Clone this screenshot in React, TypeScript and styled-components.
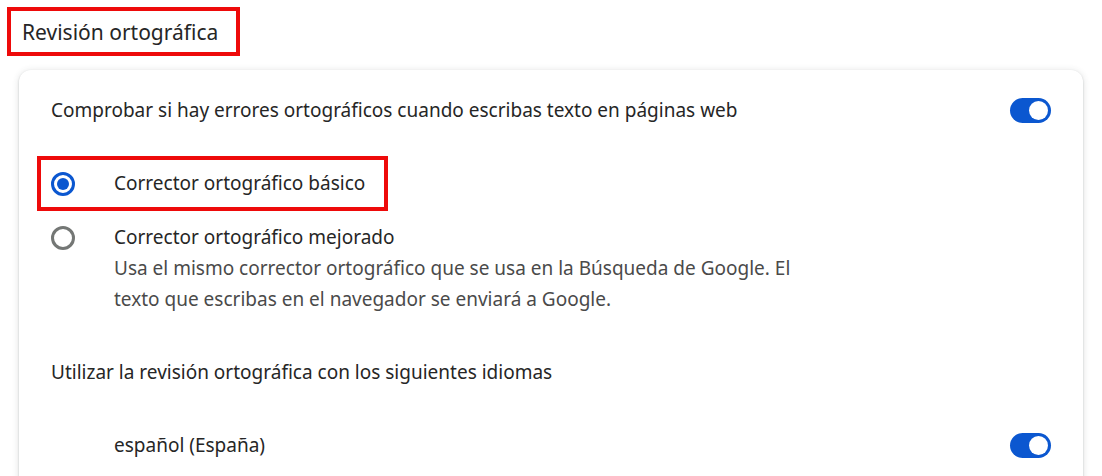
import React, { useState } from 'react'
import styled, { createGlobalStyle } from 'styled-components'

const GlobalStyle = createGlobalStyle`
  html, body {
    margin: 0;
    padding: 0;
    background: #ffffff;
    font-family: "Noto Sans", "Open Sans", sans-serif;
    color: #1f1f1f;
  }
`

const Page = styled.div`
  padding-top: 7px;
  width: 1102px;
  height: 476px;
  overflow: hidden;
`

const TitleBox = styled.div`
  margin-left: 7px;
  width: 233px;
  height: 49px;
  box-sizing: border-box;
  border: 4px solid #ee0a0a;
  padding: 0 11px;
  display: flex;
  align-items: center;
`

const Title = styled.h2`
  margin: 0;
  font-size: 21px;
  font-weight: 400;
  color: #262626;
  white-space: nowrap;
`

const Card = styled.div`
  margin: 14px 0 0 19px;
  width: 1064px;
  padding: 0 32px 40px;
  box-sizing: border-box;
  border-radius: 12px;
  background: #fff;
  box-shadow: 0 1px 2px rgba(60, 64, 67, 0.25), 0 1px 6px 1px rgba(60, 64, 67, 0.12);
`

const ToggleRow = styled.div<{ $indent?: boolean }>`
  height: ${({ $indent }) => ($indent ? '60px' : '80px')};
  display: flex;
  align-items: center;
  justify-content: space-between;
  padding-left: ${({ $indent }) => ($indent ? '63px' : '0')};
`

const Label = styled.span`
  font-size: 19px;
  line-height: 31px;
  color: #262626;
  white-space: nowrap;
`

const Track = styled.button<{ $on: boolean }>`
  width: 41px;
  height: 25px;
  padding: 0 3px;
  border: none;
  border-radius: 13px;
  background: ${({ $on }) => ($on ? '#0b57d0' : '#c4c7c5')};
  display: flex;
  align-items: center;
  justify-content: ${({ $on }) => ($on ? 'flex-end' : 'flex-start')};
  cursor: pointer;
`

const Knob = styled.span`
  width: 19px;
  height: 19px;
  border-radius: 50%;
  background: #fff;
`

const RadioGroup = styled.div`
  margin-top: 6px;
  display: flex;
  flex-direction: column;
`

const Option = styled.label<{ $highlight?: boolean }>`
  margin-left: -14px;
  width: 351px;
  box-sizing: border-box;
  border: 4px solid ${({ $highlight }) => ($highlight ? '#ee0a0a' : 'transparent')};
  padding: ${({ $highlight }) => ($highlight ? '0 0 0 10px' : '7px 0 0 10px')};
  height: ${({ $highlight }) => ($highlight ? '55px' : 'auto')};
  display: flex;
  align-items: ${({ $highlight }) => ($highlight ? 'center' : 'flex-start')};
  gap: 39px;
  cursor: pointer;
`

const RadioSlot = styled.span`
  height: 31px;
  display: flex;
  align-items: center;
  flex-shrink: 0;
`

const RadioCircle = styled.span<{ $checked: boolean }>`
  width: 24px;
  height: 24px;
  box-sizing: border-box;
  border-radius: 50%;
  border: 3px solid ${({ $checked }) => ($checked ? '#0b57d0' : '#747775')};
  display: flex;
  align-items: center;
  justify-content: center;

  &::after {
    content: '';
    width: 12px;
    height: 12px;
    border-radius: 50%;
    background: ${({ $checked }) => ($checked ? '#0b57d0' : 'transparent')};
  }
`

const OptionText = styled.div`
  display: flex;
  flex-direction: column;
`

const Description = styled.span`
  font-size: 19px;
  line-height: 31px;
  color: #4a4a4a;
  white-space: nowrap;
`

const SectionLabel = styled.div`
  margin-top: 38px;
  font-size: 19px;
  line-height: 31px;
  color: #262626;
`

const LanguageList = styled.div`
  margin-top: 27px;
`

const Toggle = ({ on, onClick }: { on: boolean; onClick: () => void }) => (
  <Track $on={on} onClick={onClick} aria-pressed={on}>
    <Knob />
  </Track>
)

const App = () => {
  const [spellcheck, setSpellcheck] = useState(true)
  const [mode, setMode] = useState<'basic' | 'enhanced'>('basic')
  const [spanish, setSpanish] = useState(true)

  return (
    <>
      <GlobalStyle />
      <Page>
        <TitleBox>
          <Title>Revisión ortográfica</Title>
        </TitleBox>
        <Card>
          <ToggleRow>
            <Label>Comprobar si hay errores ortográficos cuando escribas texto en páginas web</Label>
            <Toggle on={spellcheck} onClick={() => setSpellcheck(!spellcheck)} />
          </ToggleRow>
          <RadioGroup>
            <Option $highlight onClick={() => setMode('basic')}>
              <RadioSlot>
                <RadioCircle $checked={mode === 'basic'} />
              </RadioSlot>
              <Label>Corrector ortográfico básico</Label>
            </Option>
            <Option onClick={() => setMode('enhanced')}>
              <RadioSlot>
                <RadioCircle $checked={mode === 'enhanced'} />
              </RadioSlot>
              <OptionText>
                <Label>Corrector ortográfico mejorado</Label>
                <Description>Usa el mismo corrector ortográfico que se usa en la Búsqueda de Google. El</Description>
                <Description>texto que escribas en el navegador se enviará a Google.</Description>
              </OptionText>
            </Option>
          </RadioGroup>
          <SectionLabel>Utilizar la revisión ortográfica con los siguientes idiomas</SectionLabel>
          <LanguageList>
            <ToggleRow $indent>
              <Label>español (España)</Label>
              <Toggle on={spanish} onClick={() => setSpanish(!spanish)} />
            </ToggleRow>
          </LanguageList>
        </Card>
      </Page>
    </>
  )
}

export default App
